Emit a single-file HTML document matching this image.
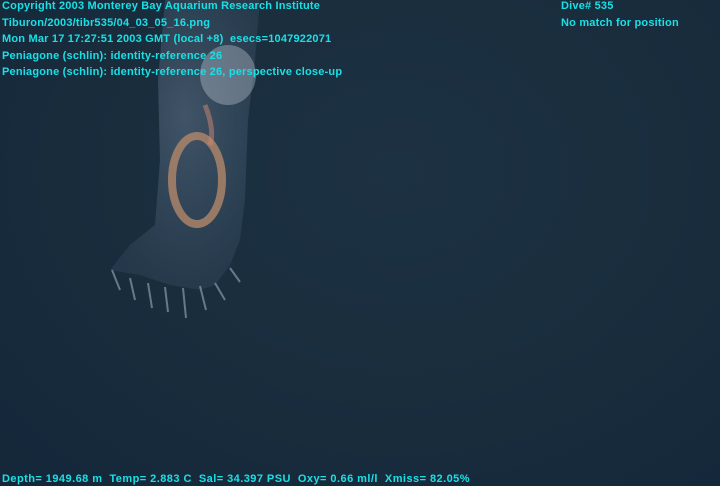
<!DOCTYPE html>
<html><head><style>
html,body{margin:0;padding:0}
body{width:720px;height:486px;position:relative;overflow:hidden;
background:radial-gradient(ellipse at 55% 35%,#1c3142 0%,#192d3d 50%,#14273a 100%);
font-family:"Liberation Sans",sans-serif;}
.t{position:absolute;color:#19e0e6;font-weight:bold;font-size:11px;letter-spacing:0.2px;white-space:pre;line-height:12px}
</style></head><body>
<svg width="720" height="486" style="position:absolute;left:0;top:0">
<defs>
<radialGradient id="b" cx="50%" cy="40%" r="60%">
<stop offset="0" stop-color="#8a9cb4" stop-opacity=".35"/>
<stop offset="1" stop-color="#6a7e9a" stop-opacity=".15"/>
</radialGradient>
</defs>
<path d="M165 0 L260 0 L255 60 L248 120 L245 200 L240 240 L230 265 L215 285 L200 290 L170 285 L140 275 L110 270 L130 245 L155 225 L160 160 L158 80 Z" fill="url(#b)"/>
<path d="M112 270 L120 290 M130 278 L135 300 M148 283 L152 308 M165 287 L168 312 M183 288 L186 318 M200 286 L206 310 M215 283 L225 300 M230 268 L240 282" stroke="#a9b8c8" stroke-width="2" opacity=".55"/>
<ellipse cx="197" cy="180" rx="25" ry="44" fill="none" stroke="#b2876a" stroke-width="8" opacity=".8"/>
<ellipse cx="228" cy="75" rx="28" ry="30" fill="#e4ecf4" opacity=".3"/>
<path d="M205 105 Q215 130 210 145" stroke="#d08a70" stroke-width="5" fill="none" opacity=".5"/>
</svg>
<div class="t" style="left:2px;top:0px">Copyright 2003 Monterey Bay Aquarium Research Institute</div>
<div class="t" style="left:2px;top:17px">Tiburon/2003/tibr535/04_03_05_16.png</div>
<div class="t" style="left:2px;top:33px">Mon Mar 17 17:27:51 2003 GMT (local +8)  esecs=1047922071</div>
<div class="t" style="left:2px;top:50px">Peniagone (schlin): identity-reference 26</div>
<div class="t" style="left:2px;top:66px">Peniagone (schlin): identity-reference 26, perspective close-up</div>
<div class="t" style="left:561px;top:0px">Dive# 535</div>
<div class="t" style="left:561px;top:17px">No match for position</div>
<div class="t" style="left:2px;top:473px;letter-spacing:0.45px">Depth= 1949.68 m  Temp= 2.883 C  Sal= 34.397 PSU  Oxy= 0.66 ml/l  Xmiss= 82.05%</div>
</body></html>
